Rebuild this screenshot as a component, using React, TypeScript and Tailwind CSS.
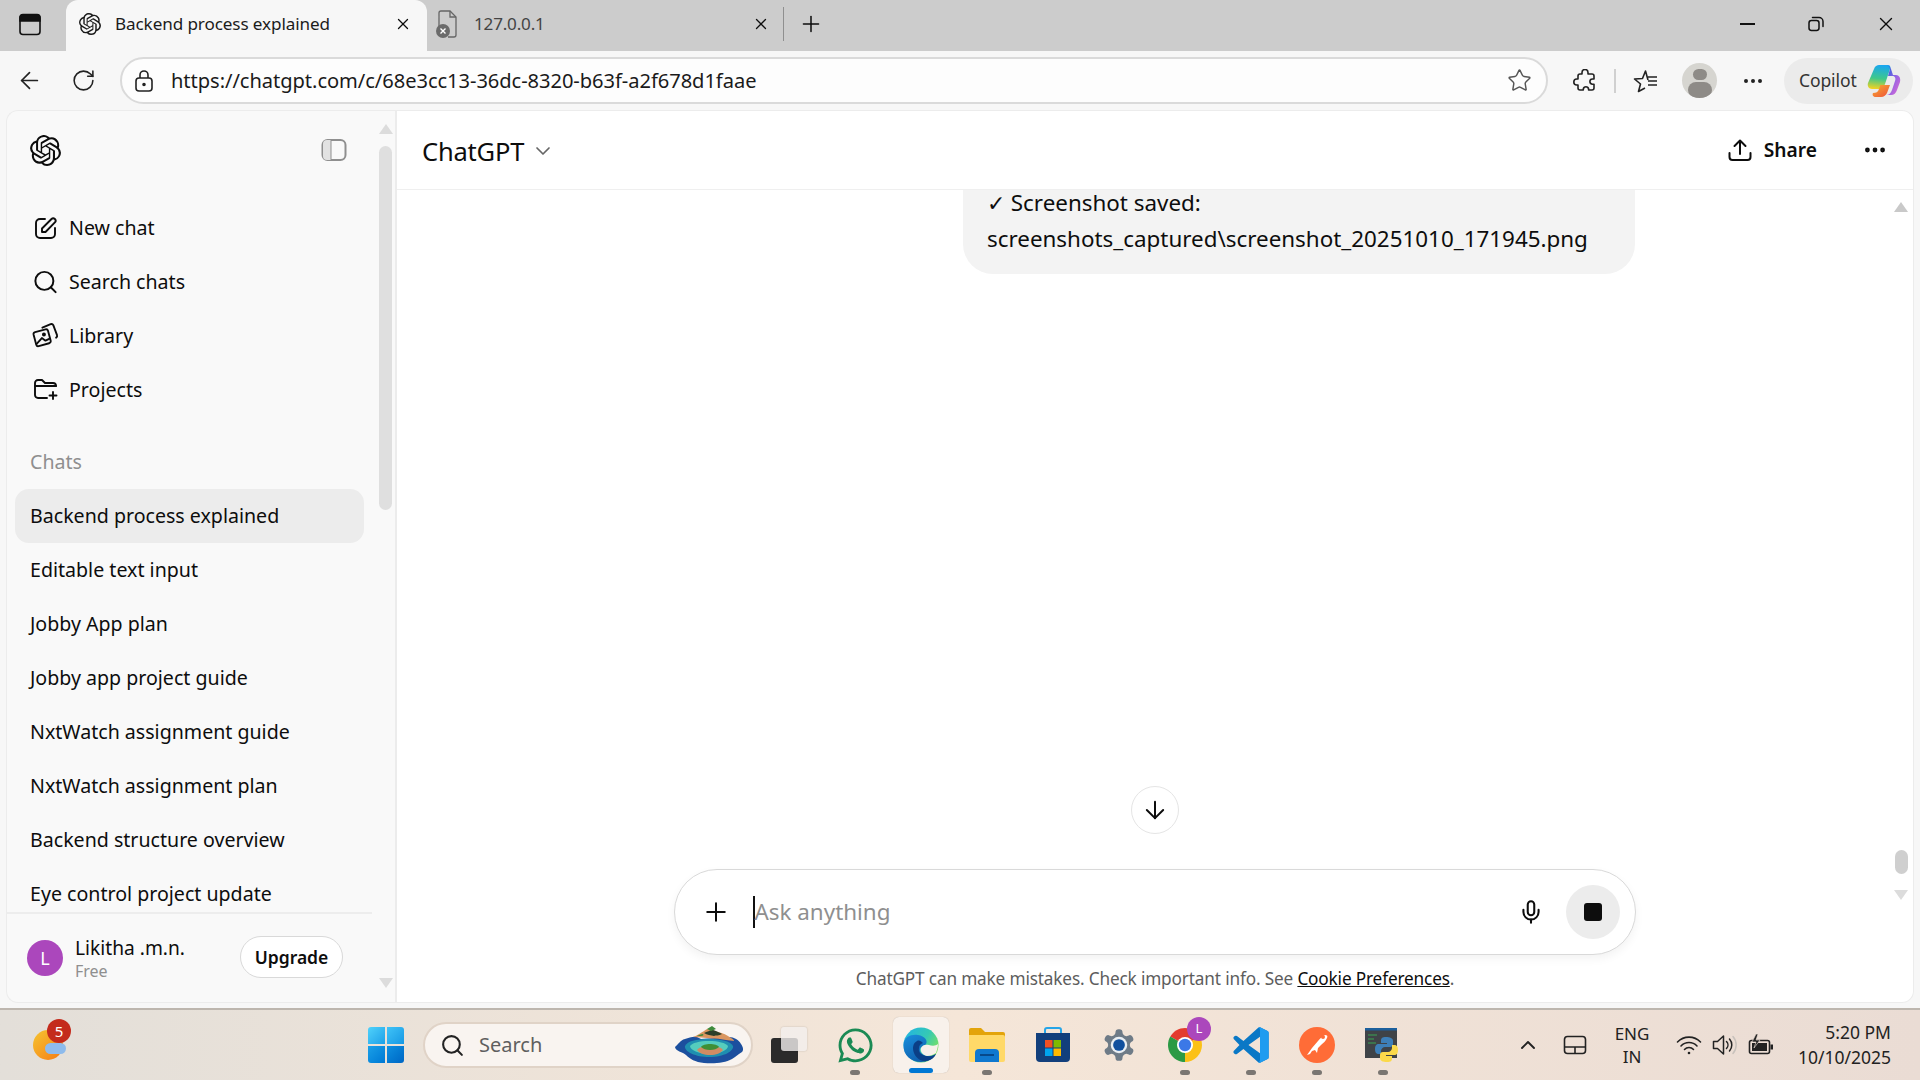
import { ArrowDown, ArrowLeft, ChevronDown, ChevronUp, Mic, MoreHorizontal, Plus, RotateCw, Search, Star, X } from 'lucide-react';
import { FaWhatsapp } from 'react-icons/fa';
import { SiOpenai } from 'react-icons/si';

const chats = [
  'Backend process explained',
  'Editable text input',
  'Jobby App plan',
  'Jobby app project guide',
  'NxtWatch assignment guide',
  'NxtWatch assignment plan',
  'Backend structure overview',
  'Eye control project update',
];

function NewChatIcon() {
  return (
    <svg width="24" height="24" viewBox="0 0 24 24" fill="none" stroke="#0d0d0d" strokeWidth="1.9" strokeLinecap="round" strokeLinejoin="round">
      <path d="M11 3H6a4 4 0 0 0-4 4v11a4 4 0 0 0 4 4h11a4 4 0 0 0 4-4v-6" />
      <path d="M8 16v-3.5L17.5 3a2.3 2.3 0 0 1 3.4 3.3L11.5 16H8z" />
    </svg>
  );
}

function LibraryIcon() {
  return (
    <svg width="28" height="28" viewBox="0 0 26 26" fill="none" stroke="#0d0d0d" strokeWidth="1.8" strokeLinejoin="round" strokeLinecap="round">
      <path d="M1.5 11.5a2 2 0 0 1 1.5-2.3l10-2.6a2 2 0 0 1 2.4 1.4l2.6 9.6a2 2 0 0 1-1.5 2.4l-10 2.8a2 2 0 0 1-2.4-1.4L1.5 11.5z" />
      <path d="M10 5l8-3.4a2 2 0 0 1 2.5 1l3.6 9.6a2 2 0 0 1-.9 2.4" />
      <path d="M4.5 20.5l5-5.5 3.5 2.5 4-2" />
      <circle cx="11.5" cy="11.5" r="1" />
    </svg>
  );
}

function ProjectsIcon() {
  return (
    <svg width="26" height="24" viewBox="0 0 26 24" fill="none" stroke="#0d0d0d" strokeWidth="1.9" strokeLinecap="round" strokeLinejoin="round">
      <path d="M14 20H5a3 3 0 0 1-3-3V5a3 3 0 0 1 3-3h4l3 3h8a3 3 0 0 1 3 3" />
      <path d="M2 8h21" />
      <path d="M20 14v7M16.5 17.5h7" />
    </svg>
  );
}

function CopilotLogo() {
  return (
    <svg width="34" height="34" viewBox="0 0 34 34">
      <defs>
        <linearGradient id="cpA" x1="0.4" y1="0" x2="0.3" y2="1">
          <stop offset="0" stopColor="#1aa7ef" />
          <stop offset="0.55" stopColor="#3fc88a" />
          <stop offset="1" stopColor="#f6d31f" />
        </linearGradient>
        <linearGradient id="cpB" x1="0" y1="0" x2="1" y2="1">
          <stop offset="0" stopColor="#1261d6" />
          <stop offset="0.5" stopColor="#8a63e6" />
          <stop offset="1" stopColor="#e86ad0" />
        </linearGradient>
        <linearGradient id="cpC" x1="0" y1="0" x2="1" y2="1">
          <stop offset="0" stopColor="#f7ae2f" />
          <stop offset="1" stopColor="#ef4f3b" />
        </linearGradient>
      </defs>
      <path d="M12 1h9c2 0 3 2 2 4l-5 15c-1 3-3 5-6 5H5c-3 0-5-3-4-6L7 5c1-3 3-4 5-4z" fill="url(#cpA)" />
      <path d="M18 1c3 0 5 1 6 4l2 6h3c3 0 5 3 4 7l-3 8c-1 3-3 5-6 5h-5c3 0 5-2 6-5l3-9c1-3 0-5-3-5h-4l2-7c0-2-2-4-5-4z" fill="url(#cpB)" />
      <path d="M14 21h9l-3 8c-1 2-3 4-6 4H9c-3 0-4-2-3-4 3 0 5-1 6-4l1-3c0-1 0-1 1-1z" fill="url(#cpC)" />
    </svg>
  );
}

function Island() {
  return (
    <svg width="72" height="38" viewBox="0 0 72 38">
      <path d="M2 21c3-2 5-7 10-8 4-1 8-3 12-2l4 2c8-1 20-1 28-2 5 0 10 3 12 7 2 3 3 6 1 8-4 2-6 5-10 7-7 4-18 5-28 4-9-1-14-4-18-8-3-3-11-4-11-8z" fill="#1c4f9e" />
      <path d="M12 20c3-5 10-7 24-7 12 0 21 2 24 7 1 5-9 11-24 11-13 0-25-5-24-11z" fill="#1f8fb0" />
      <path d="M17 20c2-3 9-5 19-5 9 0 17 2 19 5 0 4-8 8-19 8-10 0-19-4-19-8z" fill="#55cdbd" />
      <path d="M20 11c4-1 9-5 14-8 4 0 7 2 11 3 5 1 9 3 13 6 2 1 3 2 3 3l-8-1c-10-2-22-2-33-3z" fill="#d9955f" />
      <path d="M31 7c3-1 6-3 9-3 3 1 6 2 9 4-3 2-6 1-8 2-3-1-7-1-10-3z" fill="#2b3f2a" />
      <path d="M24 10c2-1 4-2 6-2 1 1 0 2-2 2z" fill="#3d8a3b" />
      <path d="M34 3l5-3 4 3-5 2z" fill="#3d8a3b" />
      <path d="M24 24c2-3 7-4 13-4s11 1 13 4c-2 3-7 5-13 5s-11-2-13-5z" fill="#d08b63" />
      <path d="M28 21c1-2 5-3 9-3s8 1 9 3c-2 2-5 3-9 3s-7-1-9-3z" fill="#3f8f35" />
    </svg>
  );
}

function EdgeIcon() {
  return (
    <svg width="36" height="36" viewBox="0 0 36 36">
      <defs>
        <linearGradient id="edA" x1="0" y1="0" x2="1" y2="0.6">
          <stop offset="0" stopColor="#1fb2e8" />
          <stop offset="0.6" stopColor="#35c9b4" />
          <stop offset="1" stopColor="#7ce25f" />
        </linearGradient>
        <linearGradient id="edB" x1="0" y1="0" x2="0.6" y2="1">
          <stop offset="0" stopColor="#1a8fdc" />
          <stop offset="1" stopColor="#0f5cab" />
        </linearGradient>
      </defs>
      <circle cx="18" cy="18" r="17.5" fill="url(#edA)" />
      <path d="M.5 18C1 9 9 7 15 8c7 1 10 6 8 9-2 2-5 2-6 5-1 4 4 7 9 7 3 0 5-1 7-2-3 5-9 8-15 8C8 35 0 28 .5 18z" fill="url(#edB)" />
      <path d="M14 14c-4 2-5 7-3 12 2 5 7 9 13 8 4-1 7-3 9-7-3 2-6 3-10 2-5-1-8-4-7-8 0-3 2-4 4-5-2-2-4-3-6-2z" fill="#0b3f86" />
      <path d="M18 21c1-3 5-4 8-3s7 1 9-1c0 3-1 6-2 9-3 2-6 3-9 3-5-1-7-5-6-8z" fill="#f8f0ea" />
    </svg>
  );
}

function FolderIcon() {
  return (
    <svg width="36" height="36" viewBox="0 0 36 36">
      <path d="M0 3a2 2 0 0 1 2-2h10l4 4h18a2 2 0 0 1 2 2v5H0z" fill="#e3a40a" />
      <path d="M0 8h34a2 2 0 0 1 2 2v23a2 2 0 0 1-2 2H2a2 2 0 0 1-2-2z" fill="#ffd968" />
      <path d="M6 35v-9a4 4 0 0 1 4-4h16a4 4 0 0 1 4 4v9z" fill="#0f78cf" />
      <path d="M11 28h14" stroke="#063e7a" strokeWidth="1.6" />
    </svg>
  );
}

function StoreIcon() {
  return (
    <svg width="36" height="36" viewBox="0 0 36 36">
      <path d="M10 8V3a2 2 0 0 1 2-2h12a2 2 0 0 1 2 2v5" fill="none" stroke="#25a5e8" strokeWidth="2" />
      <path d="M1 6h34v25a4 4 0 0 1-4 4H5a4 4 0 0 1-4-4z" fill="#123f7c" />
      <rect x="10" y="13" width="7.5" height="7.5" fill="#f25022" />
      <rect x="18.5" y="13" width="7.5" height="7.5" fill="#7fba00" />
      <rect x="10" y="21.5" width="7.5" height="7.5" fill="#00a4ef" />
      <rect x="18.5" y="21.5" width="7.5" height="7.5" fill="#ffb900" />
    </svg>
  );
}

function GearIcon() {
  return (
    <svg width="40" height="38" viewBox="0 0 24 24">
      <path
        d="M12.22 2h-.44a2 2 0 0 0-2 2v.18a2 2 0 0 1-1 1.73l-.43.25a2 2 0 0 1-2 0l-.15-.08a2 2 0 0 0-2.73.73l-.22.38a2 2 0 0 0 .73 2.73l.15.1a2 2 0 0 1 1 1.72v.51a2 2 0 0 1-1 1.74l-.15.09a2 2 0 0 0-.73 2.73l.22.38a2 2 0 0 0 2.73.73l.15-.08a2 2 0 0 1 2 0l.43.25a2 2 0 0 1 1 1.73V20a2 2 0 0 0 2 2h.44a2 2 0 0 0 2-2v-.18a2 2 0 0 1 1-1.73l.43-.25a2 2 0 0 1 2 0l.15.08a2 2 0 0 0 2.73-.73l.22-.39a2 2 0 0 0-.73-2.73l-.15-.08a2 2 0 0 1-1-1.74v-.5a2 2 0 0 1 1-1.74l.15-.09a2 2 0 0 0 .73-2.73l-.22-.38a2 2 0 0 0-2.73-.73l-.15.08a2 2 0 0 1-2 0l-.43-.25a2 2 0 0 1-1-1.73V4a2 2 0 0 0-2-2z"
        fill="#6e7b87"
      />
      <circle cx="12" cy="12" r="5.2" fill="#e9eef2" />
      <circle cx="12" cy="12" r="3.7" fill="#0f4f9e" />
    </svg>
  );
}

function ChromeIcon() {
  return (
    <svg width="36" height="36" viewBox="0 0 36 36">
      <path d="M18 18L3.3 9.5A17 17 0 0 1 32.7 9.5z" fill="#e33b2e" />
      <path d="M18 18h17A17 17 0 0 1 18 35z" fill="#fbc116" />
      <path d="M32.7 9.5A17 17 0 0 1 35 18L18 35 18 18z" fill="#fbc116" />
      <path d="M3.3 9.5A17 17 0 0 0 18 35L18 18z" fill="#2c9a45" />
      <circle cx="18" cy="18" r="8" fill="#fff" />
      <circle cx="18" cy="18" r="6.2" fill="#3b78e7" />
    </svg>
  );
}

function VsCodeIcon() {
  return (
    <svg width="36" height="36" viewBox="0 0 100 100">
      <path
        fillRule="evenodd"
        d="M96 11L75 1Q72 0 70 2L29 39 11 25Q8 23 5 25L2 28Q0 30 2 33L18 50 2 67Q0 70 2 72L5 75Q8 77 11 75L29 61 70 98Q72 100 75 99L96 89Q99 88 99 84V16Q99 12 96 11ZM75 27L43 50 75 73Z"
        fill="#0a78c6"
      />
      <path d="M70 2Q72 0 75 1L96 11Q99 12 99 16V84Q99 88 96 89L75 99Q72 100 70 98Q75 98 75 92V8Q75 2 70 2Z" fill="#1f9cf0" />
    </svg>
  );
}

function PostmanIcon() {
  return (
    <svg width="36" height="36" viewBox="0 0 36 36">
      <circle cx="18" cy="18" r="18" fill="#ff6c37" />
      <path d="M8 28l5-7 6-7c2-2 4-5 7-6 2 0 3 1 2 3-1 3-4 5-6 7l-3 3-1 5-2-3-3 1-2 3z" fill="#fff" />
      <circle cx="24" cy="10" r="2" fill="#ff6c37" />
    </svg>
  );
}

function PythonIcon() {
  return (
    <svg width="36" height="36" viewBox="0 0 36 36">
      <rect x="0" y="1" width="32" height="30" fill="#3f4347" />
      <rect x="0" y="1" width="32" height="2.5" fill="#1c5f9c" />
      <path d="M3 8h9M3 12h6M3 16h8" stroke="#3aa655" strokeWidth="1.2" />
      <path d="M21 10c-4 0-5 1-5 4v2h6v1h-8c-3 0-4 2-4 5s1 5 4 5h2v-3c0-2 2-4 4-4h5c2 0 3-1 3-3v-3c0-3-3-4-7-4z" fill="#3d7fb8" />
      <path d="M22 35c4 0 5-1 5-4v-2h-6v-1h8c3 0 4-2 4-5s-1-5-4-5h-2v3c0 2-2 4-4 4h-5c-2 0-3 1-3 3v3c0 3 3 4 7 4z" fill="#fbd94a" />
    </svg>
  );
}

function TaskbarApp({ children, running, active }: { children: React.ReactNode; running?: boolean; active?: boolean }) {
  return (
    <div className={`relative flex h-[56px] w-[56px] items-center justify-center rounded-[6px] ${active ? 'bg-[#f8f1eb] shadow-[0_0_1px_rgba(0,0,0,0.25)]' : ''}`}>
      {children}
      {running && <span className="absolute bottom-[-2px] h-[5px] w-[10px] rounded-full bg-[#7a7672]" />}
      {active && <span className="absolute bottom-[0px] h-[5px] w-[24px] rounded-full bg-[#0078d4]" />}
    </div>
  );
}

export default function App() {
  return (
    <div className="flex h-[1080px] w-[1920px] flex-col overflow-hidden bg-[#f7f7f7] font-['Noto_Sans','Open_Sans',sans-serif] text-[#0d0d0d]">
      {/* Browser tabs */}
      <div className="flex h-[51px] items-center bg-[#cccccc]">
        <div className="flex w-[66px] justify-center pb-[3px] pr-[6px]">
          <svg width="24" height="23" viewBox="0 0 24 23" fill="none" stroke="#111" strokeWidth="1.6">
            <rect x="2" y="1.5" width="20" height="20" rx="3" />
            <path d="M2 5a3 3 0 0 1 3-3h14a3 3 0 0 1 3 3v3H2z" fill="#111" />
          </svg>
        </div>
        <div className="flex h-[51px] w-[361px] items-center rounded-t-[12px] bg-[#f7f7f7] pb-[3px] pl-[13px]">
          <SiOpenai className="text-[22px] text-[#1a1a1a]" />
          <span className="ml-[14px] w-[288px] text-[17.1px] tracking-[-0.1px] text-[#1c1c1c]">Backend process explained</span>
          <X size={18} strokeWidth={1.7} className="ml-[-9px]" />
        </div>
        <div className="ml-[8px] flex items-center pb-[3px]">
          <svg width="24" height="32" viewBox="0 0 24 32" fill="none">
            <path d="M4 20V5a2 2 0 0 1 2-2h9l6 6v18a2 2 0 0 1-2 2h-6" stroke="#666" strokeWidth="1.3" />
            <path d="M15 3v6h6" stroke="#666" strokeWidth="1.3" />
            <circle cx="8" cy="23" r="7" fill="#6b6b6b" />
            <path d="M5.5 20.5l5 5m0-5l-5 5" stroke="#fff" strokeWidth="1.4" />
          </svg>
          <span className="ml-[15px] w-[279px] text-[17.1px] tracking-[-0.2px] text-[#444]">127.0.0.1</span>
          <X size={18} strokeWidth={1.7} className="ml-[-1px]" />
          <span className="ml-[13px] h-[34px] w-px bg-[#8f8f8f]" />
          <Plus size={26} strokeWidth={1.4} className="ml-[14px]" />
        </div>
        <div className="ml-auto flex items-center pb-[3px] pr-[23px]">
          <span className="h-[2px] w-[15px] bg-[#111]" />
          <svg width="16" height="16" viewBox="0 0 16 16" fill="none" stroke="#111" strokeWidth="1.5" className="ml-[53px]">
            <rect x="1" y="4.5" width="10" height="10" rx="2.4" />
            <path d="M4.5 1.5h6.5a4 4 0 0 1 4 4v5" strokeLinecap="round" />
          </svg>
          <X size={22} strokeWidth={1.5} className="ml-[51px]" />
        </div>
      </div>

      {/* Address bar row */}
      <div className="flex h-[59px] items-center">
        <ArrowLeft size={27} strokeWidth={1.5} className="ml-[16px] text-[#222]" />
        <RotateCw size={25} strokeWidth={1.5} className="ml-[28px] text-[#222]" />
        <div className="ml-[24px] flex h-[47px] w-[1428px] items-center rounded-full border-2 border-[#dadada] bg-[#fdfdfd] pl-[12px] pr-[14px]">
          <svg width="20" height="24" viewBox="0 0 20 24" fill="none" stroke="#222" strokeWidth="1.6">
            <rect x="2" y="9" width="16" height="13" rx="3" />
            <path d="M6 9V6a4 4 0 0 1 8 0v3" />
            <circle cx="10" cy="15.5" r="1" fill="#222" />
          </svg>
          <span className="ml-[17px] mt-[1px] text-[20.1px] tracking-[-0.05px] text-[#1a1a1a]">https://chatgpt.com/c/68e3cc13-36dc-8320-b63f-a2f678d1faae</span>
          <Star size={25} strokeWidth={1.4} className="ml-auto text-[#555]" />
        </div>
        <svg width="24" height="24" viewBox="0 0 24 24" fill="none" stroke="#222" strokeWidth="1.6" strokeLinejoin="round" className="ml-[25px]">
          <path d="M9 3.5a3 3 0 0 1 6 0V5h4a2 2 0 0 1 2 2v3h-1.5a2.6 2.6 0 0 0 0 5.2H21V19a2 2 0 0 1-2 2h-3.4v-1a2.7 2.7 0 0 0-5.3 0v1H7a2 2 0 0 1-2-2v-3H3.8a3 3 0 0 1 0-6H5V7a2 2 0 0 1 2-2h2z" />
        </svg>
        <span className="ml-[17px] h-[24px] w-[2px] bg-[#d0d0d0]" />
        <svg width="26" height="25" viewBox="0 0 26 25" fill="none" stroke="#222" strokeWidth="1.6" strokeLinejoin="round" className="ml-[17px]">
          <path d="M15 12l-2.5-9-3 7.5L1.5 11l6 5-2 7.5L12 20" />
          <path d="M15 9h9M15 13h9M15 17h9" />
        </svg>
        <div className="ml-[23px] flex h-[35px] w-[35px] flex-col items-center overflow-hidden rounded-full bg-[#d6d5d0]">
          <span className="mt-[6px] h-[14px] w-[14px] rounded-full bg-[#8e8b87]" />
          <span className="mt-[2px] h-[20px] w-[24px] rounded-full bg-[#8e8b87]" />
        </div>
        <MoreHorizontal size={24} strokeWidth={2} className="ml-[24px] text-[#222]" />
        <div className="ml-[19px] flex h-[46px] w-[129px] items-center rounded-full bg-[#ebebeb] pl-[15px]">
          <span className="text-[17.5px] tracking-[-0.1px] text-[#333]">Copilot</span>
          <div className="ml-[10px]">
            <CopilotLogo />
          </div>
        </div>
      </div>

      {/* Page */}
      <div className="flex h-[898px] px-[6px] pb-[5px]">
        <aside className="flex w-[389px] rounded-l-[12px] border border-[#ececec] border-r-0 bg-[#f9f9f9]">
          <div className="flex w-[365px] flex-col">
            <div className="flex h-[90px] shrink-0 items-start justify-between pl-[23px] pr-[25px] pt-[24px]">
              <SiOpenai className="text-[31px] text-[#0d0d0d]" />
              <svg width="26" height="24" viewBox="0 0 26 24" fill="none" stroke="#8f8f8f" strokeWidth="2" className="mt-[3px]">
                <rect x="1.5" y="2" width="23" height="20" rx="5" />
                <path d="M9.5 2v20" />
                <path d="M2 6a4 4 0 0 1 4-4h3.5v20H6a4 4 0 0 1-4-4z" fill="#e2e2e2" stroke="none" />
              </svg>
            </div>
            <div className="pl-[8px] pr-[8px]">
              {[
                { label: 'New chat', icon: <NewChatIcon /> },
                { label: 'Search chats', icon: <Search size={28} strokeWidth={1.75} /> },
                { label: 'Library', icon: <LibraryIcon /> },
                { label: 'Projects', icon: <ProjectsIcon /> },
              ].map((item) => (
                <div key={item.label} className="flex h-[54px] items-center pl-[17px]">
                  <div className="flex w-[27px] justify-center">{item.icon}</div>
                  <span className="ml-[10px] text-[19.6px]">{item.label}</span>
                </div>
              ))}
              <div className="mt-[18px] flex h-[54px] items-center pl-[15px] text-[19.6px] text-[#8f8f8f]">Chats</div>
            </div>
            <div className="flex-1 overflow-hidden pl-[8px] pr-[8px]">
              {chats.map((chat, i) => (
                <div key={chat} className={`flex h-[54px] items-center rounded-[14px] pl-[15px] text-[19.6px] ${i === 0 ? 'bg-[#ececec]' : ''}`}>
                  {chat}
                </div>
              ))}
            </div>
            <div className="flex h-[90px] shrink-0 items-center border-t-2 border-[#ededed] pl-[20px]">
              <span className="flex h-[36px] w-[36px] items-center justify-center rounded-full bg-[#ab47bc] text-[18px] text-white">L</span>
              <div className="ml-[12px] flex w-[165px] flex-col">
                <span className="text-[19.2px] leading-[26px]">Likitha .m.n.</span>
                <span className="text-[16px] leading-[20px] text-[#8f8f8f]">Free</span>
              </div>
              <span className="mt-[-2px] flex h-[42px] w-[103px] items-center justify-center rounded-full border border-[#d9d9d9] bg-white text-[17.5px] font-semibold">Upgrade</span>
            </div>
          </div>
          <div className="ml-[7px] flex w-[13px] flex-col items-center pt-[13px]">
            <span className="h-0 w-0 border-x-[7px] border-b-[10px] border-x-transparent border-b-[#dcdcdc]" />
            <span className="mt-[12px] h-[364px] w-[13px] rounded-full bg-[#dfdfdf]" />
            <span className="mb-[14px] mt-auto h-0 w-0 border-x-[7px] border-t-[10px] border-x-transparent border-t-[#dcdcdc]" />
          </div>
        </aside>

        <main className="relative flex flex-1 flex-col rounded-r-[12px] border border-l-2 border-[#ececec] bg-white">
          <header className="flex h-[79px] shrink-0 items-center border-b border-[#efefef] pl-[25px] pr-[25px]">
            <span className="mt-[2px] text-[25.5px] tracking-[-0.2px]">ChatGPT</span>
            <ChevronDown size={24} strokeWidth={1.7} className="ml-[7px] mt-[1px] text-[#666]" />
            <svg width="24" height="24" viewBox="0 0 24 24" fill="none" stroke="#0d0d0d" strokeWidth="2" strokeLinecap="round" strokeLinejoin="round" className="ml-auto">
              <path d="M12 16V2.5M6.5 8L12 2.5 17.5 8" />
              <path d="M1.5 15v4a3 3 0 0 0 3 3h15a3 3 0 0 0 3-3v-4" />
            </svg>
            <span className="ml-[12px] text-[19.2px] font-semibold">Share</span>
            <MoreHorizontal size={26} strokeWidth={2.4} className="ml-[45px]" />
          </header>

          <div className="flex flex-1 flex-col items-center">
            <div className="flex w-[962px] flex-1 justify-end pr-[1px]">
              <div className="h-[84px] w-[672px] rounded-b-[30px] bg-[#f3f3f3] pl-[24px] text-[22.4px] leading-[36px]">
                <p className="mt-[-5px]">✓ Screenshot saved:</p>
                <p>screenshots_captured\screenshot_20251010_171945.png</p>
              </div>
            </div>
            <div className="flex h-[86px] w-[962px] items-center rounded-full border border-[#d9d9d9] bg-white pl-[26px] pr-[15px] shadow-[0_4px_10px_rgba(0,0,0,0.05)]">
              <Plus size={30} strokeWidth={1.6} />
              <span className="ml-[22px] h-[32px] w-[1.5px] bg-[#111]" />
              <span className="text-[22.4px] text-[#8f8f8f]">Ask anything</span>
              <Mic size={26} strokeWidth={1.9} className="ml-auto" />
              <span className="ml-[22px] flex h-[54px] w-[54px] items-center justify-center rounded-full bg-[#ececec]">
                <span className="h-[18px] w-[18px] rounded-[3px] bg-[#0d0d0d]" />
              </span>
            </div>
            <p className="flex h-[47px] items-center text-[17.2px] tracking-[-0.15px] text-[#5d5d5d]">
              ChatGPT can make mistakes. Check important info. See&nbsp;<span className="text-[#0d0d0d] underline">Cookie Preferences</span>.
            </p>
          </div>

          {/* Scroll to bottom, floats over the thread */}
          <div className="absolute left-[734px] top-[675px] flex h-[48px] w-[48px] items-center justify-center rounded-full border border-[#e5e5e5] bg-white">
            <ArrowDown size={28} strokeWidth={1.7} />
          </div>

          {/* Thread scrollbar */}
          <div className="absolute right-[5px] top-[91px] flex h-[800px] w-[14px] flex-col items-center">
            <span className="h-0 w-0 border-x-[7px] border-b-[10px] border-x-transparent border-b-[#c9c9c9]" />
            <span className="absolute top-[648px] h-[24px] w-[13px] rounded-full bg-[#cfcfcf]" />
            <span className="absolute top-[688px] h-0 w-0 border-x-[7px] border-t-[10px] border-x-transparent border-t-[#dcdcdc]" />
          </div>
        </main>
      </div>

      {/* Taskbar */}
      <div className="flex h-[72px] items-center border-t-2 border-[#bdb6ae] bg-gradient-to-r from-[#e3dfd9] via-[#f5e6d8] to-[#eadcd4] pl-[33px]">
        <div className="relative h-[30px] w-[30px] rounded-full bg-gradient-to-br from-[#f4c430] to-[#f47a14]">
          <span className="absolute left-[14px] top-[-11px] flex h-[24px] w-[24px] items-center justify-center rounded-full bg-[#c42b1c] text-[15px] text-white">5</span>
          <span className="absolute left-[12px] top-[13px] h-[11px] w-[21px] rounded-full bg-[#8ebbec]" />
        </div>

        <div className="ml-[305px] grid h-[36px] w-[36px] grid-cols-2 grid-rows-2 gap-[1.5px] overflow-hidden rounded-[3px]">
          <span className="bg-gradient-to-br from-[#4fd2fb] to-[#1aa0e8]" />
          <span className="bg-gradient-to-br from-[#3fc3f7] to-[#1498e4]" />
          <span className="bg-gradient-to-br from-[#1aa0e8] to-[#0078d4]" />
          <span className="bg-gradient-to-br from-[#1090e0] to-[#0066c4]" />
        </div>

        <div className="ml-[19px] flex h-[46px] w-[330px] items-center rounded-full border-2 border-[#e0d3c7] bg-[#f9f4f0] pl-[15px]">
          <Search size={25} strokeWidth={2} className="text-[#222]" />
          <span className="ml-[14px] text-[20px] text-[#5f5f5f]">Search</span>
          <div className="ml-auto mr-[6px]">
            <Island />
          </div>
        </div>

        <div className="relative ml-[18px] h-[36px] w-[36px]">
          <span className="absolute bottom-0 left-0 h-[25px] w-[27px] rounded-[3px] bg-[#2b2b2b]" />
          <span className="absolute right-0 top-0 h-[24px] w-[26px] rounded-[3px] bg-[#f2efee]/80 shadow-[0_0_2px_rgba(0,0,0,0.2)]" />
        </div>

        <div className="ml-[20px] flex items-center gap-[10px]">
          <TaskbarApp running>
            <FaWhatsapp className="text-[39px] text-[#1a8a54]" />
          </TaskbarApp>
          <TaskbarApp active>
            <EdgeIcon />
          </TaskbarApp>
          <TaskbarApp running>
            <FolderIcon />
          </TaskbarApp>
          <TaskbarApp>
            <StoreIcon />
          </TaskbarApp>
          <TaskbarApp>
            <GearIcon />
          </TaskbarApp>
          <TaskbarApp running>
            <ChromeIcon />
            <span className="absolute right-[2px] top-[0px] flex h-[24px] w-[24px] items-center justify-center rounded-full bg-[#ab47bc] text-[13px] text-white">L</span>
          </TaskbarApp>
          <TaskbarApp running>
            <VsCodeIcon />
          </TaskbarApp>
          <TaskbarApp running>
            <PostmanIcon />
          </TaskbarApp>
          <TaskbarApp running>
            <PythonIcon />
          </TaskbarApp>
        </div>

        <ChevronUp size={24} strokeWidth={1.9} className="ml-[105px] text-[#222]" />
        <svg width="24" height="20" viewBox="0 0 24 20" fill="none" stroke="#222" strokeWidth="1.6" className="ml-[23px]">
          <rect x="1.5" y="1.5" width="21" height="17" rx="3" />
          <path d="M1.5 12h21M12 12v6.5" />
        </svg>
        <div className="ml-[15px] flex w-[60px] flex-col items-center text-[17px] leading-[23px] text-[#222]">
          <span>ENG</span>
          <span>IN</span>
        </div>
        <svg width="26" height="20" viewBox="0 0 26 20" fill="none" stroke="#222" strokeWidth="1.6" strokeLinecap="round" className="ml-[14px]">
          <path d="M1.5 7a16 16 0 0 1 23 0M5 11a11 11 0 0 1 16 0M8.5 14.5a6 6 0 0 1 9 0" />
          <circle cx="13" cy="18" r="1.3" fill="#222" stroke="none" />
        </svg>
        <svg width="26" height="22" viewBox="0 0 26 22" fill="none" stroke="#222" strokeWidth="1.5" className="ml-[10px]">
          <path d="M1.5 7.5h4L11.5 2v18l-6-5.5h-4z" strokeLinejoin="round" />
          <path d="M14.5 7.5a5 5 0 0 1 0 7M17.5 5a9 9 0 0 1 0 12" strokeLinecap="round" />
          <path d="M21 2.5a13 13 0 0 1 0 17" stroke="#c8c2bc" strokeLinecap="round" />
        </svg>
        <svg width="26" height="22" viewBox="0 0 26 22" fill="none" className="ml-[10px]">
          <rect x="1.5" y="6.5" width="20" height="13" rx="2" stroke="#222" strokeWidth="1.6" />
          <rect x="22.5" y="10.5" width="2.5" height="5" fill="#222" />
          <rect x="4" y="9" width="15" height="8" fill="#222" />
          <path d="M8 0L4 8h4l-2 6 6-8H8l2-6z" fill="#222" stroke="#f0e2d9" strokeWidth="0.6" />
        </svg>
        <div className="ml-[22px] flex w-[95px] flex-col items-end text-[17.5px] leading-[25px] text-[#222]">
          <span>5:20 PM</span>
          <span>10/10/2025</span>
        </div>
      </div>
    </div>
  );
}
